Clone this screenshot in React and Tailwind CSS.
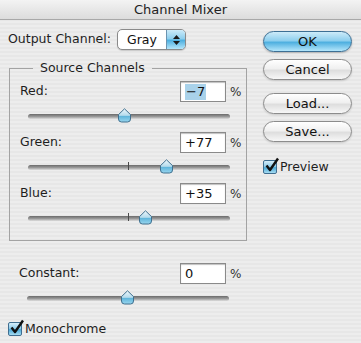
import React from 'react';

const font = { fontFamily: '"DejaVu Sans", "Liberation Sans", sans-serif' };

const channels = [
  { id: 'red', label: 'Red:', value: -7, text: '−7', selected: true, tick: false },
  { id: 'green', label: 'Green:', value: 77, text: '+77', tick: true },
  { id: 'blue', label: 'Blue:', value: 35, text: '+35', tick: true },
];

const Thumb = ({ value }) => (
  <svg
    width="15"
    height="15"
    viewBox="0 0 15 15"
    className="absolute top-[6px]"
    style={{ left: 100 + value * 0.5 - 7.5 }}
  >
    <defs>
      <linearGradient id={`th${value}`} x1="0" y1="0" x2="0" y2="1">
        <stop offset="0" stopColor="#eef8fc" />
        <stop offset="0.5" stopColor="#b5dbec" />
        <stop offset="0.55" stopColor="#5db4da" />
        <stop offset="1" stopColor="#9ad6ef" />
      </linearGradient>
    </defs>
    <path
      d="M7.5 0.8 L13.5 6.6 V11 Q13.5 14 10.5 14 H4.5 Q1.5 14 1.5 11 V6.6 Z"
      fill={`url(#th${value})`}
      stroke="#40708f"
      strokeWidth="1"
    />
  </svg>
);

const Slider = ({ value, tick }) => (
  <div className="relative h-[30px] w-[202px] ml-[8px]">
    <div className="absolute left-0 right-0 top-[12px] h-[5px] rounded-full bg-[linear-gradient(#6a6a6a,#9c9c9c_55%,#dedede)]" />
    {tick && <div className="absolute left-[100px] top-[9px] h-[8px] w-px bg-[#4a4a4a]" />}
    <Thumb value={value} />
  </div>
);

const ValueRow = ({ label, text, selected }) => (
  <div className="flex items-center h-[21px]">
    <span className="flex-1 text-[12.5px] text-[#1e1e1e]">{label}</span>
    <div className="w-[46px] h-[21px] bg-white border border-[#8a8a8a] shadow-[inset_0_1px_1px_rgba(0,0,0,0.25)] flex items-center pl-[4px] text-[13px] text-[#111]">
      <span className={selected ? 'bg-[#a9d2ea] px-[1px] leading-[16px]' : 'leading-[16px]'}>{text}</span>
    </div>
    <span className="ml-[4px] w-[9px] text-[12px] text-[#333]">%</span>
  </div>
);

const CheckBox = ({ label }) => (
  <div className="flex items-center gap-[3px]">
    <div className="relative w-[14px] h-[14px] rounded-[2px] border border-[#3f6e90] bg-[linear-gradient(#d6eefa,#86c8e8_50%,#4aa8d6_55%,#a6dcf2)]">
      <svg width="16" height="16" viewBox="0 0 16 16" className="absolute -top-[4px] left-0">
        <path d="M2.5 8.5 L6 13 L14 1.5" fill="none" stroke="#111" strokeWidth="2.4" strokeLinejoin="round" />
      </svg>
    </div>
    <span className="text-[12.5px] text-[#1e1e1e]">{label}</span>
  </div>
);

const AquaButton = ({ children, primary, className = '' }) => (
  <div
    className={`h-[21px] w-[89px] rounded-full border flex items-center justify-center text-[13px] text-[#111] ${
      primary
        ? 'border-[#3d6f94] bg-[linear-gradient(#cdebf9,#8ecfee_45%,#4fb0e0_55%,#b4e6fb)] shadow-[0_1px_2px_rgba(0,0,0,0.25)]'
        : 'border-[#8c8c8c] bg-[linear-gradient(#ffffff,#f0f0f0_45%,#dedede_55%,#f7f7f7)] shadow-[0_1px_2px_rgba(0,0,0,0.15)]'
    } ${className}`}
  >
    {children}
  </div>
);

export default function App() {
  return (
    <div
      className="w-[361px] h-[343px] overflow-hidden bg-[repeating-linear-gradient(0deg,#ededed_0px,#ededed_2px,#e7e7e7_2px,#e7e7e7_4px)]"
      style={font}
    >
      {/* Title bar */}
      <div className="h-[20px] border-b border-[#a8a8a8] bg-[linear-gradient(#f3f3f3,#dcdcdc)] flex items-center justify-center text-[13px] text-[#222]">
        Channel Mixer
      </div>

      <div className="flex pl-[8px]">
        {/* Left column */}
        <div className="w-[239px]">
          <div className="flex items-center mt-[9px] h-[21px]">
            <span className="text-[12.5px] text-[#1e1e1e] w-[109px]">Output Channel:</span>
            <div className="flex h-[21px] w-[69px] rounded-[5px] border border-[#8a8a8a] bg-white overflow-hidden shadow-[0_1px_1px_rgba(0,0,0,0.15)]">
              <span className="flex-1 pl-[9px] text-[12.5px] leading-[19px] text-[#111]">Gray</span>
              <div className="w-[19px] bg-[linear-gradient(#cdebf9,#8ecfee_45%,#4fb0e0_55%,#b4e6fb)] border-l border-[#6c94b0] flex flex-col items-center justify-center gap-[2px]">
                <svg width="7" height="4" viewBox="0 0 7 4"><path d="M3.5 0 L7 4 H0 Z" fill="#1a1a1a" /></svg>
                <svg width="7" height="4" viewBox="0 0 7 4"><path d="M0 0 H7 L3.5 4 Z" fill="#1a1a1a" /></svg>
              </div>
            </div>
          </div>

          <fieldset className="mt-[10px] ml-[1px] w-[238px] border border-[#a3a3a3] pl-[10px] pr-[7px] pt-[5px] pb-[6px]">
            <legend className="ml-[13px] px-[7px] text-[12.5px] leading-[16px] text-[#1e1e1e]">Source Channels</legend>
            {channels.map((c) => (
              <div key={c.id}>
                <ValueRow label={c.label} text={c.text} selected={c.selected} />
                <Slider value={c.value} tick={c.tick} />
              </div>
            ))}
          </fieldset>

          <div className="mt-[22px] pl-[11px] pr-[8px]">
            <ValueRow label="Constant:" text="0" />
            <Slider value={0} />
          </div>

          <div className="mt-[6px]">
            <CheckBox label="Monochrome" />
          </div>
        </div>

        {/* Right column */}
        <div className="ml-[16px] mt-[11px] flex flex-col">
          <AquaButton primary>OK</AquaButton>
          <AquaButton className="mt-[7px]">Cancel</AquaButton>
          <AquaButton className="mt-[13px]">Load...</AquaButton>
          <AquaButton className="mt-[7px]">Save...</AquaButton>
          <div className="mt-[16px]">
            <CheckBox label="Preview" />
          </div>
        </div>
      </div>
    </div>
  );
}
